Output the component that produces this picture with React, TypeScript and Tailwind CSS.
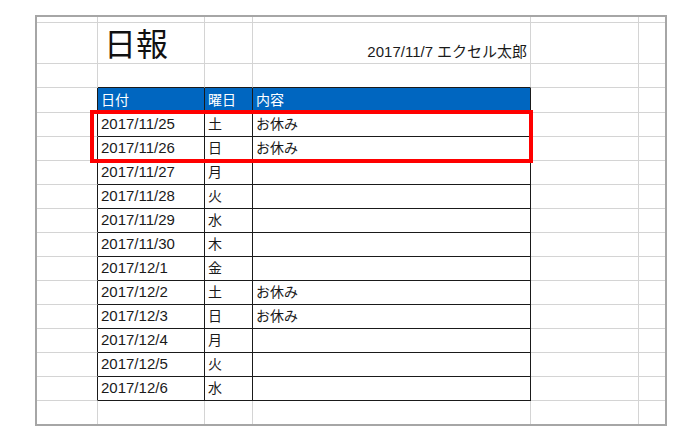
const DATA_ROWS: [string, string, string][] = [
  ['2017/11/25', '土', 'お休み'],
  ['2017/11/26', '日', 'お休み'],
  ['2017/11/27', '月', ''],
  ['2017/11/28', '火', ''],
  ['2017/11/29', '水', ''],
  ['2017/11/30', '木', ''],
  ['2017/12/1', '金', ''],
  ['2017/12/2', '土', 'お休み'],
  ['2017/12/3', '日', 'お休み'],
  ['2017/12/4', '月', ''],
  ['2017/12/5', '火', ''],
  ['2017/12/6', '水', ''],
];

const COL_W = ['w-[61px]', 'w-[107px]', 'w-[48px]', 'w-[278px]', 'w-[108px]', 'w-[26px]'];

// gray sheet gridlines
const grid = 'border-r border-b border-[#d4d4d4]';

function GrayRow({ h, last, tableBelow }: { h: string; last?: boolean; tableBelow?: boolean }) {
  return (
    <div className={`flex ${h}`}>
      {COL_W.map((w, i) => {
        let cls = `${w} shrink-0 border-[#d4d4d4]`;
        cls += i < 5 ? ' border-r' : '';
        cls += last ? '' : ' border-b';
        if (tableBelow && i >= 1 && i <= 3) cls += ' border-b-[#1a1a1a]';
        return <div key={i} className={cls} />;
      })}
    </div>
  );
}

function TableRow({ cells, header }: { cells: [string, string, string]; header?: boolean }) {
  const tableCell = header
    ? 'shrink-0 border-r border-b border-[#1a1a1a] bg-[#0066c0] text-white text-[14px] px-[3px] flex items-center'
    : 'shrink-0 border-r border-b border-[#1a1a1a] text-[#1a1a1a] px-[3px] flex items-center';
  return (
    <div className={`flex ${header ? 'h-[25px]' : 'h-[24px]'}`}>
      <div className={`${COL_W[0]} shrink-0 border-b border-[#d4d4d4] border-r border-r-[#1a1a1a]`} />
      <div className={`${COL_W[1]} ${tableCell} text-[15px]`}>
        {header ? <span className="text-[14px]">{cells[0]}</span> : cells[0]}
      </div>
      <div className={`${COL_W[2]} ${tableCell} text-[14px]`}>{cells[1]}</div>
      <div className={`${COL_W[3]} ${tableCell} text-[14px]`}>{cells[2]}</div>
      <div className={`${COL_W[4]} shrink-0 ${grid}`} />
      <div className={`${COL_W[5]} shrink-0 border-b border-[#d4d4d4]`} />
    </div>
  );
}

export default function App() {
  return (
    <div
      className="w-[700px] h-[439px] bg-white overflow-hidden pt-[15px] pl-[35px]"
      style={{ fontFamily: '"Liberation Sans", "Noto Sans CJK JP", sans-serif' }}
    >
      <div className="relative w-[632px] border-2 border-[#a6a6a6]">
        <GrayRow h="h-[6px]" />

        {/* title row */}
        <div className="flex h-[41px]">
          <div className={`${COL_W[0]} shrink-0 ${grid}`} />
          <div className={`${COL_W[1]} shrink-0 ${grid} flex items-end pl-[6px] pb-[2px]`}>
            <span className="text-[32px] leading-none font-normal text-[#111]">日報</span>
          </div>
          <div className={`${COL_W[2]} shrink-0 ${grid}`} />
          <div className={`${COL_W[3]} shrink-0 ${grid} flex items-end justify-end pr-[3px] pb-[4px] text-[#1a1a1a] leading-none text-[15px]`}>
            <span>2017/11/7 </span>
            <span className="ml-[4px]">エクセル太郎</span>
          </div>
          <div className={`${COL_W[4]} shrink-0 ${grid}`} />
          <div className={`${COL_W[5]} shrink-0 border-b border-[#d4d4d4]`} />
        </div>

        <GrayRow h="h-[24px]" tableBelow />

        <TableRow header cells={['日付', '曜日', '内容']} />
        {DATA_ROWS.map((r) => (
          <TableRow key={r[0]} cells={r} />
        ))}

        <GrayRow h="h-[23px]" last />

        {/* highlight box over the first two rows */}
        <div className="absolute left-[53px] top-[93px] w-[443px] h-[53px] border-[4px] border-[#ff0000]" />
      </div>
    </div>
  );
}
